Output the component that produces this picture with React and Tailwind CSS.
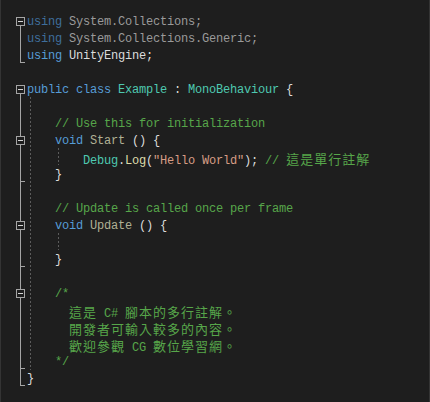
import React from "react";

const C = {
  kw: "text-[#569cd6]",
  kwDim: "text-[#3f6e9c]",
  dim: "text-[#9a9a9a]",
  tx: "text-[#dcdcdc]",
  ty: "text-[#4ec9b0]",
  cm: "text-[#57a64a]",
  mt: "text-[#b0b094]",
  fn: "text-[#dcdcaa]",
  st: "text-[#d69d85]",
};

const lines = [
  [["using", "kwDim"], [" System.Collections;", "dim"]],
  [["using", "kwDim"], [" System.Collections.Generic;", "dim"]],
  [["using", "kw"], [" UnityEngine;", "tx"]],
  [],
  [["public class", "kw"], [" ", "tx"], ["Example", "ty"], [" : ", "tx"], ["MonoBehaviour", "ty"], [" {", "tx"]],
  [],
  [["    // Use this for initialization", "cm"]],
  [["    ", "tx"], ["void", "kw"], [" ", "tx"], ["Start", "mt"], [" () {", "tx"]],
  [["        ", "tx"], ["Debug", "ty"], [".", "tx"], ["Log", "fn"], ["(", "tx"], ['"Hello World"', "st"], [");", "tx"], [" // 這是單行註解", "cm"]],
  [["    }", "tx"]],
  [],
  [["    // Update is called once per frame", "cm"]],
  [["    ", "tx"], ["void", "kw"], [" ", "tx"], ["Update", "mt"], [" () {", "tx"]],
  [],
  [["    }", "tx"]],
  [],
  [["    /*", "cm"]],
  [["      這是 C# 腳本的多行註解。", "cm"]],
  [["      開發者可輸入較多的內容。", "cm"]],
  [["      歡迎參觀 CG 數位學習網。", "cm"]],
  [["    */", "cm"]],
  [["}", "tx"]],
];

function renderText(text) {
  const parts = text.split(/([\u3000-\u9fff\uff00-\uffef]+)/);
  return parts.map((p, i) =>
    /[\u3000-\u9fff\uff00-\uffef]/.test(p) ? (
      <span
        key={i}
        className="font-['Noto_Sans_CJK_TC','Noto_Sans_CJK_SC',sans-serif] text-[13px] tracking-[1px] leading-[17px]"
      >
        {p}
      </span>
    ) : (
      <React.Fragment key={i}>{p}</React.Fragment>
    )
  );
}

function Box({ line }) {
  const T = 17 + 17 * line;
  return (
    <g>
      <rect x="15.5" y={T + 0.5} width="8" height="8" fill="#1e1e1e" stroke="#a5a5a5" strokeWidth="1" />
      <line x1="17" x2="22" y1={T + 4.5} y2={T + 4.5} stroke="#d4d4d4" strokeWidth="1" />
    </g>
  );
}

function Gutter() {
  const stroke = "#a5a5a5";
  return (
    <svg width="26" height="400" viewBox="0 0 26 400" className="shrink-0 block">
      <line x1="19.5" x2="19.5" y1="26" y2="63" stroke={stroke} />
      <line x1="19" x2="24" y1="62.5" y2="62.5" stroke={stroke} />
      <line x1="19.5" x2="19.5" y1="94" y2="386" stroke={stroke} />
      <line x1="19" x2="24" y1="181.5" y2="181.5" stroke={stroke} />
      <line x1="19" x2="24" y1="266.5" y2="266.5" stroke={stroke} />
      <line x1="19" x2="24" y1="368.5" y2="368.5" stroke={stroke} />
      <line x1="19" x2="24" y1="385.5" y2="385.5" stroke={stroke} />
      <Box line={0} />
      <Box line={4} />
      <Box line={7} />
      <Box line={12} />
      <Box line={16} />
    </svg>
  );
}

export default function App() {
  return (
    <div className="w-[430px] h-[402px] bg-[#1e1e1e] border-x border-[#343434] flex overflow-hidden">
      <Gutter />
      <div className="relative flex-1 pt-[14px] font-['Liberation_Mono','Noto_Sans_CJK_TC',monospace] text-[12px] tracking-[-0.2px] leading-[17px]">
        <svg className="absolute inset-0 pointer-events-none" width="403" height="400">
          <line x1="3.5" x2="3.5" y1="97" y2="370" stroke="#5c5c5c" strokeDasharray="2 2" />
          <line x1="31.5" x2="31.5" y1="148" y2="165" stroke="#5c5c5c" strokeDasharray="2 2" />
          <line x1="31.5" x2="31.5" y1="233" y2="250" stroke="#5c5c5c" strokeDasharray="2 2" />
        </svg>
        {lines.map((toks, i) => (
          <div key={i} className="relative h-[17px] whitespace-pre">
            {toks.map(([t, c], j) => (
              <span key={j} className={C[c]}>
                {renderText(t)}
              </span>
            ))}
          </div>
        ))}
      </div>
    </div>
  );
}
